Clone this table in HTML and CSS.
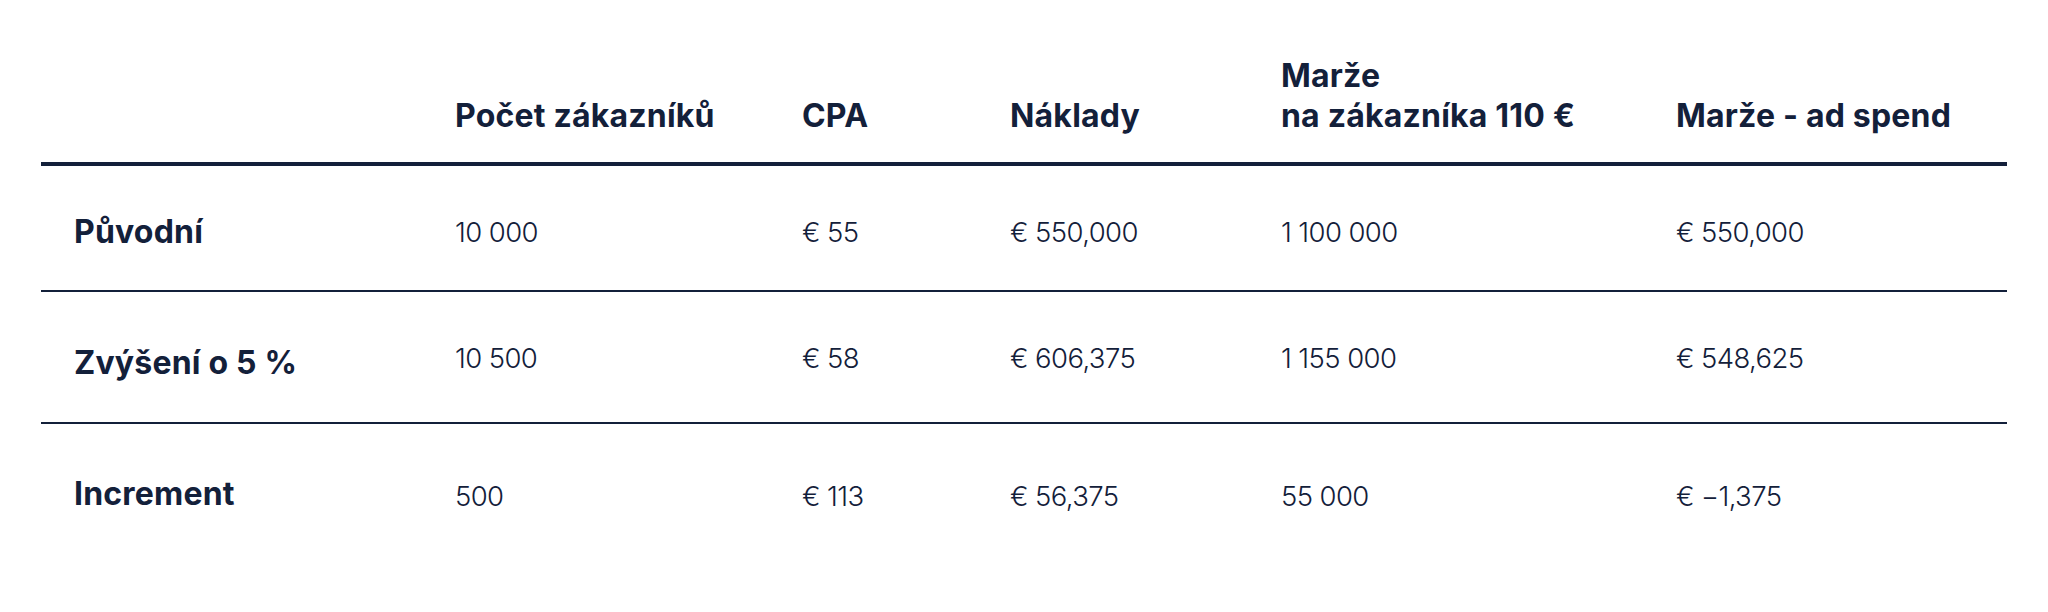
FILE: index.html
```html
<!DOCTYPE html>
<html lang="cs">
<head>
<meta charset="utf-8">
<title>Marže</title>
<link rel="stylesheet" href="styles.css">
</head>
<body>
<div class="table">
  <div class="row head">
    <div class="cell"></div>
    <div class="cell">Počet zákazníků</div>
    <div class="cell">CPA</div>
    <div class="cell">Náklady</div>
    <div class="cell">Marže<br>na zákazníka 110 €</div>
    <div class="cell">Marže - ad spend</div>
  </div>
  <div class="row body r1">
    <div class="cell label">Původní</div>
    <div class="cell">10 000</div>
    <div class="cell">€ 55</div>
    <div class="cell">€ 550,000</div>
    <div class="cell">1 100 000</div>
    <div class="cell">€ 550,000</div>
  </div>
  <div class="row body r2">
    <div class="cell label">Zvýšení o 5 %</div>
    <div class="cell">10 500</div>
    <div class="cell">€ 58</div>
    <div class="cell">€ 606,375</div>
    <div class="cell">1 155 000</div>
    <div class="cell">€ 548,625</div>
  </div>
  <div class="row body r3">
    <div class="cell label">Increment</div>
    <div class="cell">500</div>
    <div class="cell">€ 113</div>
    <div class="cell">€ 56,375</div>
    <div class="cell">55 000</div>
    <div class="cell">€ −1,375</div>
  </div>
</div>
</body>
</html>
```

FILE: styles.css
```css
* { box-sizing: border-box; }
html, body { margin: 0; padding: 0; background: #ffffff; }
body {
  font-family: Inter, "Noto Sans", sans-serif;
  color: #13203a;
  width: 2048px;
  height: 612px;
  overflow: hidden;
}
.table {
  margin: 0 41px 0 41px;
  padding-top: 56px;
}
.row {
  display: grid;
  grid-template-columns: 414px 347px 208px 271px 395px 1fr;
}
.head {
  align-items: end;
  padding-bottom: 26px;
  border-bottom: 4px solid #13203a;
  font-size: 32px;
  font-weight: 700;
  line-height: 40px;
  letter-spacing: 0.2px;
}
.body {
  align-items: start;
  font-size: 27.5px;
  font-weight: 300;
  line-height: 40px;
  letter-spacing: -0.6px;
}
.body .label {
  padding-left: 33px;
  font-size: 32px;
  font-weight: 700;
  letter-spacing: 0.2px;
}
.r1 { height: 126px; padding-top: 46px; border-bottom: 2px solid #13203a; }
.r2 { height: 132px; padding-top: 46px; border-bottom: 2px solid #13203a; }
.r2 .label { margin-top: 5px; }
.r3 { padding-top: 52px; }
.r3 .label { margin-top: -2px; }
```
